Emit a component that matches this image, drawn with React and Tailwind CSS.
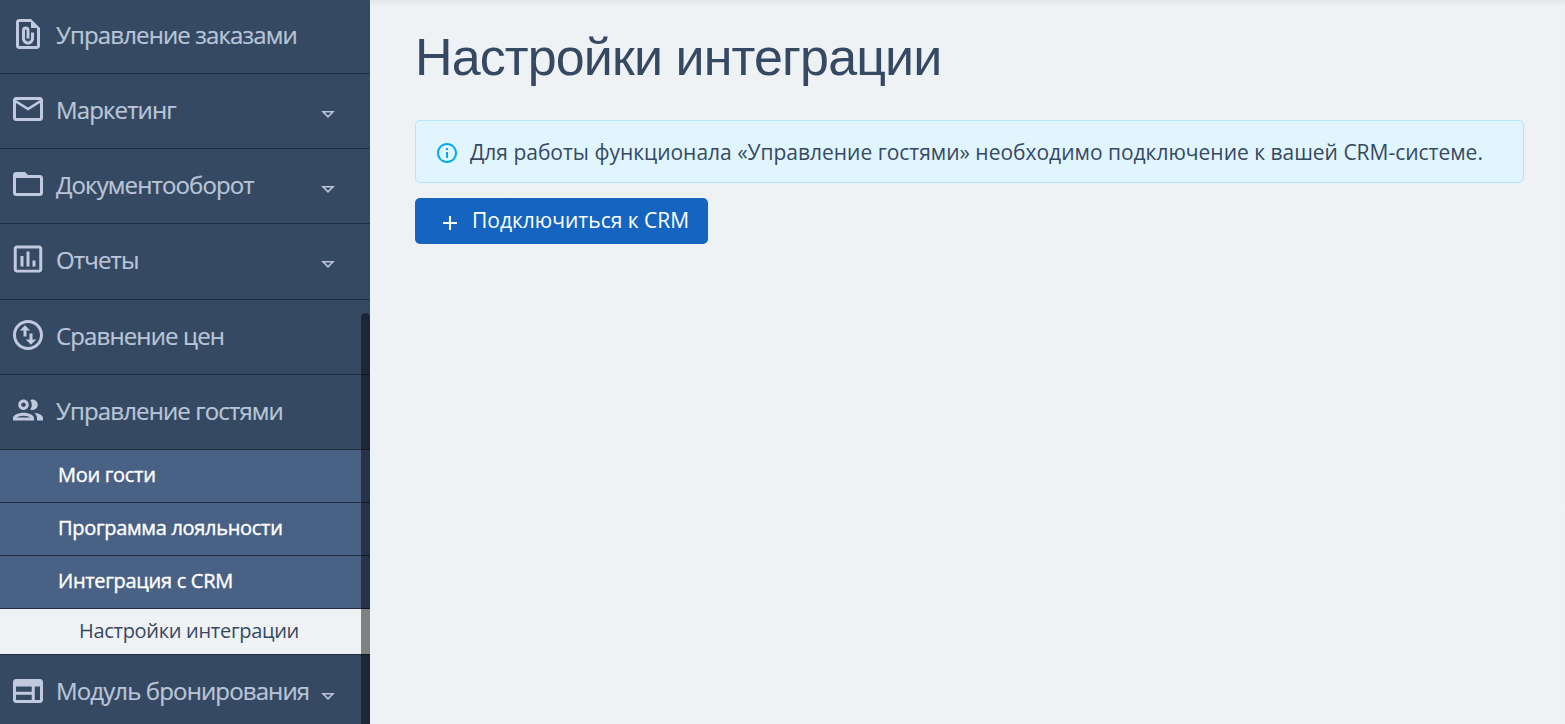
import {
  MdAdd,
  MdFolderOpen,
  MdInfoOutline,
  MdInsertChartOutlined,
  MdMailOutline,
  MdOutlineFilePresent,
  MdOutlinePeople,
  MdOutlineSwapVerticalCircle,
  MdOutlineWeb,
} from "react-icons/md";

const Arrow = () => (
  <svg className="ml-auto mt-[11px] shrink-0" width="14" height="9" viewBox="0 0 14 9">
    <path d="M2 1.7h10L7 6.9z" fill="none" stroke="currentColor" strokeWidth="1.6" />
  </svg>
);

const MenuItem = ({ icon: Icon, label, arrow, size = "h-[75px] pb-1" }) => (
  <li className={`flex items-center border-b border-[#232f41] pl-2.5 pr-[35px] ${size}`}>
    <Icon className="size-9 shrink-0 text-[#c0c9dd]" />
    <a
      href="#"
      className="ml-2.5 mt-px whitespace-nowrap text-2xl tracking-[-0.87px] [-webkit-text-stroke:0.2px]"
    >
      {label}
    </a>
    {arrow && <Arrow />}
  </li>
);

const SubItem = ({ label }) => (
  <li className="flex h-[53px] items-center border-b border-[#232f41] bg-[#486184] pb-0.5 pl-[58px] text-xl tracking-[-0.3px] text-white [-webkit-text-stroke:0.4px]">
    <a href="#">{label}</a>
  </li>
);

const Sidebar = () => (
  <aside className="relative h-full w-[370px] shrink-0 overflow-hidden bg-[#364962] text-[#b9c5d8]">
    <ul>
      <MenuItem icon={MdOutlineFilePresent} label="Управление заказами" size="h-[74px] pb-[5px]" />
      <MenuItem icon={MdMailOutline} label="Маркетинг" arrow />
      <MenuItem icon={MdFolderOpen} label="Документооборот" arrow />
      <MenuItem icon={MdInsertChartOutlined} label="Отчеты" arrow size="h-[76px] pb-[5px]" />
      <MenuItem icon={MdOutlineSwapVerticalCircle} label="Сравнение цен" />
      <MenuItem icon={MdOutlinePeople} label="Управление гостями" />
      <SubItem label="Мои гости" />
      <SubItem label="Программа лояльности" />
      <SubItem label="Интеграция с CRM" />
      <li className="flex h-[46px] items-center border-b border-[#232f41] bg-[#eef2f5] pb-0.5 pl-[79px] text-xl tracking-[-0.3px] text-[#364962]">
        <a href="#">Настройки интеграции</a>
      </li>
      <MenuItem icon={MdOutlineWeb} label="Модуль бронирования" arrow size="h-[75px] pb-[3px]" />
    </ul>
    {/* scrollbar thumb */}
    <div className="absolute right-0 top-[313px] h-[420px] w-[9px] rounded-t-full bg-black/47" />
  </aside>
);

const App = () => {
  return (
    <div className="flex h-screen overflow-hidden bg-[#eef2f5] font-['Open_Sans',sans-serif]">
      <Sidebar />
      <main className="flex-1 bg-linear-to-b from-[#e2e6e9] to-[#eef2f5] to-[6px] pl-[45px] pr-[41px] pt-[26px]">
        <h1 className="h-[94px] whitespace-nowrap font-['Liberation_Sans',sans-serif] text-[52px] leading-[62px] tracking-[-0.88px] text-[#364962]">
          Настройки интеграции
        </h1>
        <div className="flex h-[63px] items-center rounded-[5px] border border-[#b3e5fc] bg-[#e1f5fe] pl-[19px] text-[#364962]">
          <MdInfoOutline className="mt-0.5 size-6 shrink-0 text-[#03a9f4]" />
          <p className="ml-[11px] mt-0.5 whitespace-nowrap text-[21px] tracking-[-0.015px]">
            Для работы функционала «Управление гостями» необходимо подключение к вашей CRM-системе.
          </p>
        </div>
        <button className="mt-[15px] flex h-[46px] w-[293px] items-center rounded-[5px] bg-[#1565c0] pl-[23px] text-[21px] text-white">
          <MdAdd className="mt-1 size-6 shrink-0" />
          <span className="ml-2.5 whitespace-nowrap">Подключиться к CRM</span>
        </button>
      </main>
    </div>
  );
};

export default App;
